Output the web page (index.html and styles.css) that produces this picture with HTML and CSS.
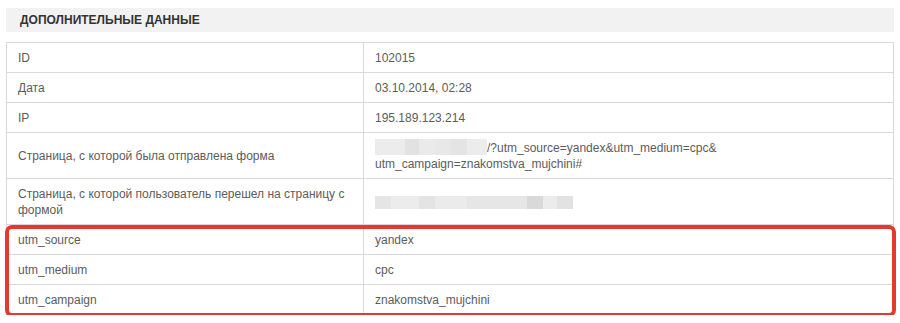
FILE: index.html
```html
<!DOCTYPE html>
<html lang="ru">
<head>
<meta charset="utf-8">
<title>Дополнительные данные</title>
<link rel="stylesheet" href="styles.css">
</head>
<body>
<div class="page">
  <div class="section-head">ДОПОЛНИТЕЛЬНЫЕ ДАННЫЕ</div>
  <div class="table-wrap">
    <table class="data">
      <tbody>
        <tr><td class="k">ID</td><td class="v">102015</td></tr>
        <tr><td class="k">Дата</td><td class="v">03.10.2014, 02:28</td></tr>
        <tr><td class="k">IP</td><td class="v">195.189.123.214</td></tr>
        <tr><td class="k">Страница, с которой была отправлена форма</td><td class="v"><span class="blur b1"></span>/?utm_source=yandex&amp;utm_medium=cpc&amp;<br>utm_campaign=znakomstva_mujchini#</td></tr>
        <tr><td class="k">Страница, с которой пользователь перешел на страницу с формой</td><td class="v"><span class="blur b2"></span></td></tr>
        <tr><td class="k">utm_source</td><td class="v">yandex</td></tr>
        <tr><td class="k">utm_medium</td><td class="v">cpc</td></tr>
        <tr><td class="k">utm_campaign</td><td class="v">znakomstva_mujchini</td></tr>
      </tbody>
    </table>
    <div class="highlight"></div>
  </div>
</div>
</body>
</html>
```

FILE: styles.css
```css
html, body {
  margin: 0;
  padding: 0;
  background: #fff;
}
body {
  font-family: "Liberation Sans", Arial, sans-serif;
  font-size: 12px;
  color: #5c5c5c;
}
.page {
  padding: 8px 6px 0 6px;
}
.section-head {
  height: 24px;
  line-height: 24px;
  background: #f2f2f2;
  padding-left: 14px;
  font-weight: bold;
  color: #333;
  font-size: 12px;
  margin-bottom: 10px;
}
.table-wrap {
  position: relative;
  width: 888px;
}
.data {
  width: 888px;
  border-collapse: collapse;
  table-layout: fixed;
}
.data td {
  border: 1px solid #d9d9d9;
  padding: 6.5px 12px 6.5px 11px;
  line-height: 16px;
  vertical-align: middle;
}
.data td.k {
  width: 333px;
}
.data td.v {
  padding-left: 11px;
}
.blur {
  display: inline-block;
  vertical-align: middle;
}
.b1 {
  width: 112px;
  height: 16px;
  margin-top: -2px;
  background: linear-gradient(90deg,
    #ececec 0, #ececec 30px,
    #e2e2e2 30px, #e2e2e2 44px,
    #eaeaea 44px, #eaeaea 60px,
    #e8e8e8 60px, #e8e8e8 76px,
    #e4e4e4 76px, #e4e4e4 92px,
    #ececec 92px, #ececec 112px);
}
.b2 {
  width: 198px;
  height: 13px;
  background: linear-gradient(90deg,
    #e5e5e5 0, #e5e5e5 16px,
    #ececec 16px, #ececec 44px,
    #e4e4e4 44px, #e4e4e4 60px,
    #ebebeb 60px, #ebebeb 92px,
    #e6e6e6 92px, #e6e6e6 152px,
    #d9d9d9 152px, #d9d9d9 168px,
    #ececec 168px, #ececec 182px,
    #e2e2e2 182px, #e2e2e2 198px);
}
.highlight {
  position: absolute;
  left: -1px;
  right: -2px;
  bottom: -2px;
  height: 92px;
  border: 4px solid #e33a2e;
  border-radius: 7px;
  box-sizing: border-box;
  pointer-events: none;
}
```
